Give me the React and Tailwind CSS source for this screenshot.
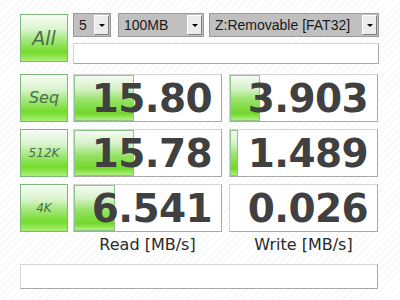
const rows = [
  { label: "Seq", size: "text-[16px]", read: "15.80", rw: 60, write: "3.903", ww: 30 },
  { label: "512K", size: "text-[12px]", read: "15.78", rw: 60, write: "1.489", ww: 8 },
  { label: "4K", size: "text-[12px]", read: "6.541", rw: 41, write: "0.026", ww: 0 },
];

const GreenButton = ({ children, size }) => (
  <div className="w-[48px] h-[48px] border border-[#7fb87f] bg-[linear-gradient(to_bottom,#f6fcf3_0%,#dcf4d0_30%,#a3e779_55%,#74dc2c_80%,#a9ef74_100%)] flex items-center justify-center">
    <span className={`${size} italic text-[#4a6f4a] font-['DejaVu_Sans',sans-serif]`}>{children}</span>
  </div>
);

const Dropdown = ({ text, width }) => (
  <div className={`${width} h-[24px] border border-[#9a9a9a] bg-[#c0c0c0] flex items-stretch p-[1px]`}>
    <div className="flex-1 px-[4px] flex items-center text-[14px] text-[#1a1a1a] font-['Liberation_Sans',sans-serif] leading-none">
      {text}
    </div>
    <div className="w-[15px] bg-[#ececec] border border-[#ffffff] border-r-[#808080] border-b-[#808080] flex items-center justify-center">
      <div className="w-0 h-0 border-l-[3px] border-r-[3px] border-t-[3px] border-l-transparent border-r-transparent border-t-black" />
    </div>
  </div>
);

const ValueBox = ({ value, fill }) => (
  <div className="relative w-[149px] h-[48px] bg-white border border-[#d4d4d4] border-r-[#a8a8a8] border-b-[#a8a8a8] flex items-center justify-end pr-[9px]">
    {fill > 0 && (
      <div
        className="absolute left-0 top-0 bottom-0 border border-[#8cc48c] bg-[linear-gradient(to_bottom,#f6fcf3_0%,#d4f1c6_30%,#96e266_55%,#72d82a_85%,#b2f080_100%)]"
        style={{ width: fill }}
      />
    )}
    <span className="relative text-[39px] font-bold text-[#404040] leading-none font-['DejaVu_Sans',sans-serif] tracking-[-0.6px]">
      {value}
    </span>
  </div>
);

export default function App() {
  return (
    <div className="w-[400px] h-[300px] bg-[repeating-linear-gradient(135deg,#ffffff_0px,#ffffff_3px,#f4f4f4_4px,#ffffff_5px)] pl-[20px] pt-[14px] font-['DejaVu_Sans',sans-serif]">
      <div className="flex gap-[5px]">
        <GreenButton size="text-[19px]">All</GreenButton>
        <div className="flex flex-col">
          <div className="flex -mt-[1px]">
            <Dropdown text="5" width="w-[38px]" />
            <div className="w-[7px]" />
            <Dropdown text="100MB" width="w-[86px]" />
            <div className="w-[5px]" />
            <Dropdown text="Z:Removable [FAT32]" width="w-[170px]" />
          </div>
          <div className="mt-[6px] w-[306px] h-[21px] bg-white border border-[#d4d4d4] border-r-[#a8a8a8] border-b-[#a8a8a8]" />
        </div>
      </div>
      <div className="mt-[10px] flex flex-col gap-[7px]">
        {rows.map((r) => (
          <div key={r.label} className="flex gap-[5px]">
            <GreenButton size={r.size}>{r.label}</GreenButton>
            <div className="flex gap-[7px]">
              <ValueBox value={r.read} fill={r.rw} />
              <ValueBox value={r.write} fill={r.ww} />
            </div>
          </div>
        ))}
      </div>
      <div className="flex gap-[5px] mt-[1px]">
        <div className="w-[48px]" />
        <div className="flex gap-[7px] text-[16px] text-[#2a2a2a]">
          <div className="w-[149px] text-center">Read [MB/s]</div>
          <div className="w-[149px] text-center">Write [MB/s]</div>
        </div>
      </div>
      <div className="mt-[7px] w-[358px] h-[25px] bg-white border border-[#d4d4d4] border-r-[#a8a8a8] border-b-[#a8a8a8]" />
    </div>
  );
}
